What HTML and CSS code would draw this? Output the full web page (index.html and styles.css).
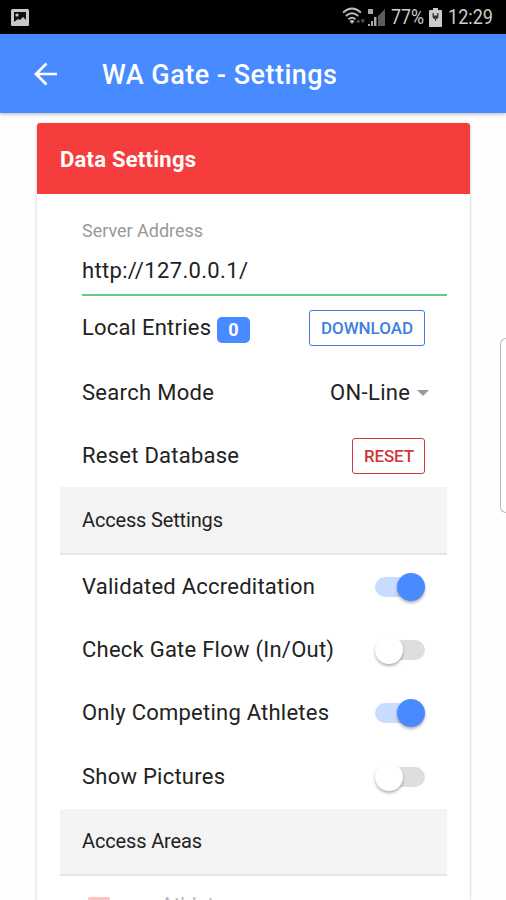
FILE: index.html
```html
<!DOCTYPE html>
<html lang="en">
<head>
<meta charset="utf-8">
<title>WA Gate - Settings</title>
<link rel="stylesheet" href="styles.css">
</head>
<body>
<div class="status">
  <svg class="photo" width="18" height="17" viewBox="0 0 18 17"><rect width="18" height="17" rx="1.5" fill="#c8c8c8"/><path d="M3 3h12v8l-3-3-3 3-2-1-4 3z" fill="#111"/><circle cx="6" cy="6" r="1.6" fill="#c8c8c8"/></svg>
  <div class="tray">
    <svg class="net" width="44" height="20" viewBox="0 0 44 20"><g fill="none" stroke="#bbb" stroke-width="1.900"><path d="M1 5.500q9-8 18 0M3.800 9q6.200-5.500 12.400 0M6.500 12.300q3.500-3 7 0"/></g><path d="M7.500 14q2.500-2 5 0L10 17z" fill="#bbb"/><path d="M14 15.500l2.200-3.500 2.200 3.500zM18.500 12.500h4.500l-2.200 4z" fill="#555"/><path d="M26 2h5v5h-5zM32 10h2.500v9H32zM29 14h2v5h-2zM26 17h2v2h-2z" fill="#aaa"/><path d="M43 2v17h-7V9z" fill="#5c5c5c"/></svg>
    <svg class="fit" width="34" height="24"><text x="0" y="19" textLength="33" lengthAdjust="spacingAndGlyphs">77%</text></svg>
    <svg class="bat" width="13" height="19" viewBox="0 0 13 19"><path d="M4 0h5v2h3q1 0 1 1v15q0 1-1 1H1q-1 0-1-1V3q0-1 1-1h3z" fill="#ccc"/><path d="M3.500 5v3q0 3 2.500 3v2h1v-2q2.500 0 2.500-3V5h-1.300v2.500H4.800V5z" fill="#333"/></svg>
    <svg class="fit" width="46" height="24"><text x="0" y="19" textLength="45" lengthAdjust="spacingAndGlyphs">12:29</text></svg>
  </div>
</div>
<header class="bar">
  <svg class="back" width="24" height="24" viewBox="0 0 24 24"><path d="M23 12H2M12.500 1.500L2 12l10.500 10.500" fill="none" stroke="#fff" stroke-width="2.700"/></svg>
  <h1><svg class="fit" width="236" height="34"><text x="0" y="25" textLength="235">WA Gate - Settings</text></svg></h1>
</header>
<main class="card">
  <h2><svg class="fit" width="150" height="30"><text x="0" y="22" textLength="136">Data Settings</text></svg></h2>
  <div class="list">
    <div class="field">
      <svg class="fit label" width="140" height="24"><text x="0" y="18" textLength="121">Server Address</text></svg>
      <svg class="fit" width="200" height="30"><text x="0" y="22" textLength="166">http://127.0.0.1/</text></svg>
    </div>
    <div class="row entries"><svg class="fit" width="135" height="30"><text x="0" y="22" textLength="129">Local Entries</text></svg><span class="badge">0</span><button class="btn download"><svg class="fit" width="92" height="20"><text x="0" y="16" textLength="92">DOWNLOAD</text></svg></button></div>
    <div class="row mode"><svg class="fit" width="140" height="30"><text x="0" y="22" textLength="132">Search Mode</text></svg><span class="select"><svg class="fit" width="81" height="30"><text x="0" y="22" textLength="80">ON-Line</text></svg><i class="caret"></i></span></div>
    <div class="row reset"><svg class="fit" width="160" height="30"><text x="0" y="22" textLength="157">Reset Database</text></svg><button class="btn danger"><svg class="fit" width="50" height="20"><text x="0" y="16" textLength="50">RESET</text></svg></button></div>
    <div class="divider"><svg class="fit" width="160" height="28"><text x="0" y="20" textLength="141">Access Settings</text></svg></div>
    <div class="row opt"><svg class="fit" width="240" height="30"><text x="0" y="22" textLength="233">Validated Accreditation</text></svg><span class="toggle on"></span></div>
    <div class="row opt"><svg class="fit" width="260" height="30"><text x="0" y="22" textLength="252">Check Gate Flow (In/Out)</text></svg><span class="toggle"></span></div>
    <div class="row opt"><svg class="fit" width="260" height="30"><text x="0" y="22" textLength="247">Only Competing Athletes</text></svg><span class="toggle on"></span></div>
    <div class="row opt"><svg class="fit" width="160" height="30"><text x="0" y="22" textLength="143">Show Pictures</text></svg><span class="toggle"></span></div>
    <div class="divider last"><svg class="fit" width="160" height="28"><text x="0" y="20" textLength="120">Access Areas</text></svg></div>
    <div class="area"><span class="check"></span><svg class="fit" width="100" height="30"><text x="0" y="22" textLength="76">Athletes</text></svg></div>
  </div>
</main>
<div class="handle"></div>
</body>
</html>
```
FILE: styles.css
```css
* { box-sizing: border-box; }
body { margin: 0; width: 506px; height: 900px; overflow: hidden; background: #fefefe; font-family: Roboto, sans-serif; color: #222; display: flex; flex-direction: column; }
.status { height: 34px; flex: none; background: #000; display: flex; justify-content: space-between; align-items: center; padding: 0 12px 0 11px; }
.tray { display: flex; align-items: center; color: #ccc; font-size: 20px; }
.net { margin-right: 5px; }
.bat { margin: 0 6px 0 4px; }
.fit { display: block; flex: none; overflow: visible; }
.fit text { fill: currentColor; }
.bar { height: 79px; flex: none; background: #488aff; color: #fff; display: flex; align-items: center; padding-left: 34px; box-shadow: 0 1px 4px rgba(0,0,0,.3); }
.back { margin-right: 44px; }
h1 { margin: 4px 0 0; font-size: 27px; font-weight: 500; }
.card { width: 433px; flex: 1 1 0; min-height: 0; margin: 10px 0 0 37px; background: #fff; border-radius: 3px 3px 0 0; box-shadow: 0 1px 3px rgba(0,0,0,.25); }
h2 { height: 71px; margin: 0; padding: 22px 22px 0 23px; background: #f53d3d; color: #fff; border-radius: 3px 3px 0 0; font-size: 22px; font-weight: 700; }
.list { margin: 0 23px; font-size: 22px; }
.field { height: 102px; margin-left: 22px; padding-top: 25px; border-bottom: 2px solid #65c98a; }
.label { color: #999; font-size: 18px; margin-bottom: 13px; }
.row { height: 63.400px; padding: 0 22px; display: flex; align-items: center; justify-content: space-between; }
.entries { height: 64px; justify-content: flex-start; }
.mode { height: 65px; padding-right: 18px; }
.reset { height: 62px; }
.badge { width: 33px; height: 26px; background: #488aff; color: #fff; border-radius: 5px; font-size: 18px; line-height: 26px; font-weight: 700; text-align: center; margin-top: 3px; }
.btn { height: 36px; padding: 0; display: flex; align-items: center; justify-content: center; background: #fff; border: 1.500px solid; border-radius: 3px; font: 500 17px Roboto, sans-serif; }
.download { width: 116px; margin-left: auto; color: #3f80dc; }
.danger { width: 73px; color: #d0373b; }
.select { display: flex; align-items: center; gap: 6px; }
.caret { border: 6.500px solid transparent; border-top-color: #999; border-bottom: 0; }
.divider { height: 68px; padding: 20px 22px; background: #f4f4f4; border-bottom: 2px solid #e6e6e6; font-size: 20px; }
.divider.last { height: 67px; padding-top: 19px; }
.toggle { width: 50px; height: 20px; border-radius: 10px; background: #dedede; display: flex; align-items: center; }
.toggle::before { content: ""; width: 28px; height: 28px; flex: none; border-radius: 50%; background: #fff; box-shadow: 0 2px 3px rgba(0,0,0,.3); }
.toggle.on { background: #c8dcff; }
.toggle.on::before { background: #488aff; margin-left: 22px; }
.area { height: 24px; display: flex; padding: 15px 0 0 28px; opacity: .3; }
.check { width: 22px; height: 22px; margin-top: 6px; border-radius: 2px; background: #f53d3d; }
.area .fit { margin-left: 50px; }
.handle { position: absolute; left: 500px; top: 338px; width: 6px; height: 175px; border: 1px solid #bbb; border-right: 0; border-radius: 7px 0 0 7px; background: #fff; }
```
